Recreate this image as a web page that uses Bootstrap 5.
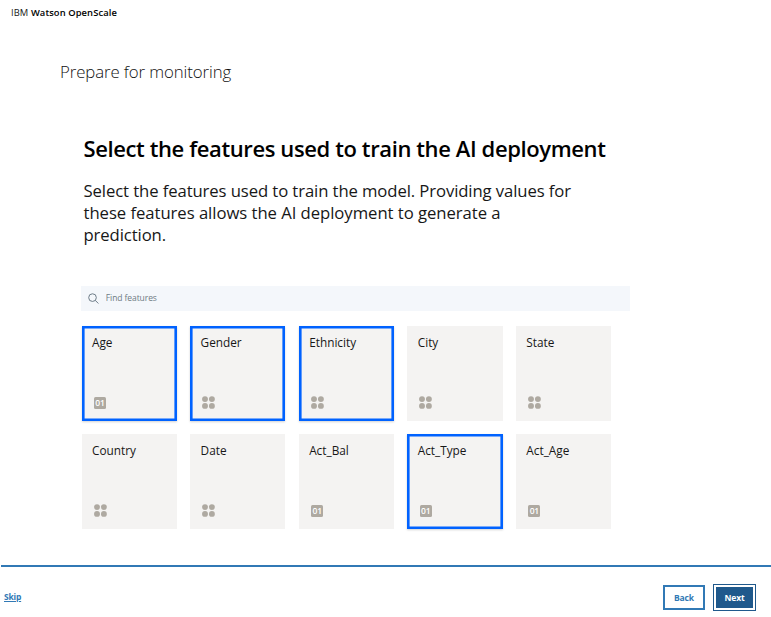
<!DOCTYPE html>
<html lang="en">
<head>
<meta charset="utf-8">
<meta name="viewport" content="width=device-width, initial-scale=1">
<title>IBM Watson OpenScale</title>
<link href="https://cdn.jsdelivr.net/npm/bootstrap@5.3.0/dist/css/bootstrap.min.css" rel="stylesheet">
<style>
body{font-family:"Open Sans","Noto Sans",sans-serif;color:#171717;height:617px;overflow:hidden}
.brand-bar{height:26px;padding-left:11px;font-size:9.4px;letter-spacing:.09px}
.brand-bar b{font-weight:600;color:#000}
.page-title{font-size:16.8px;font-weight:300;line-height:24px;margin:34px 0 0 60px;color:#111;letter-spacing:-.09px}
.intro{margin:50px 0 0 83.5px;height:152px}
.intro h1{font-size:22px;font-weight:600;line-height:28px;margin:0 0 18px;color:#000;letter-spacing:-.39px}
.intro p{font-size:16.7px;line-height:22px;margin:0;letter-spacing:-.1px}
.intro p .line-two{letter-spacing:-.05px}
.finder{width:549px;height:25px;margin-left:81px;background:#f4f7fb;padding-left:7px}
.finder input{font-size:8.5px;color:#5a6872;padding:0 0 2px 7px;line-height:20px;min-height:0;height:23px;border:0;background:none;letter-spacing:-.08px}
.finder input::placeholder{color:#6f7b83;opacity:1}
.tiles{display:grid;grid-template-columns:repeat(5,95.4px);gap:13.2px;margin:15px 0 0 81.5px}
.tile{height:95px;background:#f4f3f2;padding:7px 10.5px 12px;font-size:11.8px;line-height:18px}
.tile.selected{box-shadow:inset 0 0 0 2.6px #0062ff,0 1px 2px rgba(0,0,0,.18)}
.tile svg{margin-left:1.5px;fill:#aea9a1}
.num-icon{width:12px;height:12px;margin:0 0 .5px 2px;border-radius:1.5px;background:#aea9a1;color:#fff;font-size:8.5px;line-height:12px;font-weight:600;letter-spacing:-.2px}
.foot{margin:36px 0 0 1px;border-top:2px solid #3179b5;padding:17px 15px 0 3px}
.foot a{font-size:8.5px;font-weight:700;color:#3179b5;letter-spacing:-.2px}
.foot .btn{font-size:8.5px;font-weight:700;border-radius:0;padding:0;width:42px;height:25px;line-height:20px;border-width:2px;border-color:#3179b5;color:#3179b5;letter-spacing:-.1px}
.foot .btn-next{background:#20598c;color:#fff;border:1px solid #20598c;height:27px;width:43px;line-height:24px;box-shadow:inset 0 0 0 2px #fff}
</style>
</head>
<body class="bg-white">
<header class="brand-bar d-flex align-items-center"><span>IBM <b>Watson OpenScale</b></span></header>
<main>
<h2 class="page-title">Prepare for monitoring</h2>
<section class="intro text-nowrap">
<h1>Select the features used to train the AI deployment</h1>
<p>Select the features used to train the model. Providing values for<br><span class="line-two">these features allows the AI deployment to generate a</span><br>prediction.</p>
</section>
<div class="finder d-flex align-items-center">
<svg width="11" height="11" viewBox="0 0 11 11" fill="none" stroke="#6b7a85" stroke-width="1"><circle cx="4.6" cy="4.6" r="3.9"/><path d="M7.4 7.4 10.6 10.6"/></svg>
<input class="form-control shadow-none" placeholder="Find features" aria-label="Find features">
</div>
<svg class="d-none">
<symbol id="cat" viewBox="0 0 13 13"><circle cx="3" cy="3.1" r="2.95"/><circle cx="9.9" cy="3.1" r="2.95"/><circle cx="3" cy="9.9" r="2.95"/><circle cx="9.9" cy="9.9" r="2.95"/></symbol>
</svg>
<div class="tiles">
<div class="tile selected d-flex flex-column justify-content-between"><span>Age</span><span class="num-icon d-flex justify-content-center">01</span></div>
<div class="tile selected d-flex flex-column justify-content-between"><span>Gender</span><svg width="13" height="13"><use href="#cat"/></svg></div>
<div class="tile selected d-flex flex-column justify-content-between"><span>Ethnicity</span><svg width="13" height="13"><use href="#cat"/></svg></div>
<div class="tile d-flex flex-column justify-content-between"><span>City</span><svg width="13" height="13"><use href="#cat"/></svg></div>
<div class="tile d-flex flex-column justify-content-between"><span>State</span><svg width="13" height="13"><use href="#cat"/></svg></div>
<div class="tile d-flex flex-column justify-content-between"><span>Country</span><svg width="13" height="13"><use href="#cat"/></svg></div>
<div class="tile d-flex flex-column justify-content-between"><span>Date</span><svg width="13" height="13"><use href="#cat"/></svg></div>
<div class="tile d-flex flex-column justify-content-between"><span>Act_Bal</span><span class="num-icon d-flex justify-content-center">01</span></div>
<div class="tile selected d-flex flex-column justify-content-between"><span>Act_Type</span><span class="num-icon d-flex justify-content-center">01</span></div>
<div class="tile d-flex flex-column justify-content-between"><span>Act_Age</span><span class="num-icon d-flex justify-content-center">01</span></div>
</div>
</main>
<footer class="foot d-flex justify-content-between align-items-center">
<a href="#">Skip</a>
<div class="d-flex align-items-center gap-2"><button class="btn btn-back">Back</button><button class="btn btn-next">Next</button></div>
</footer>
<script src="https://cdn.jsdelivr.net/npm/bootstrap@5.3.0/dist/js/bootstrap.bundle.min.js"></script>
</body>
</html>
